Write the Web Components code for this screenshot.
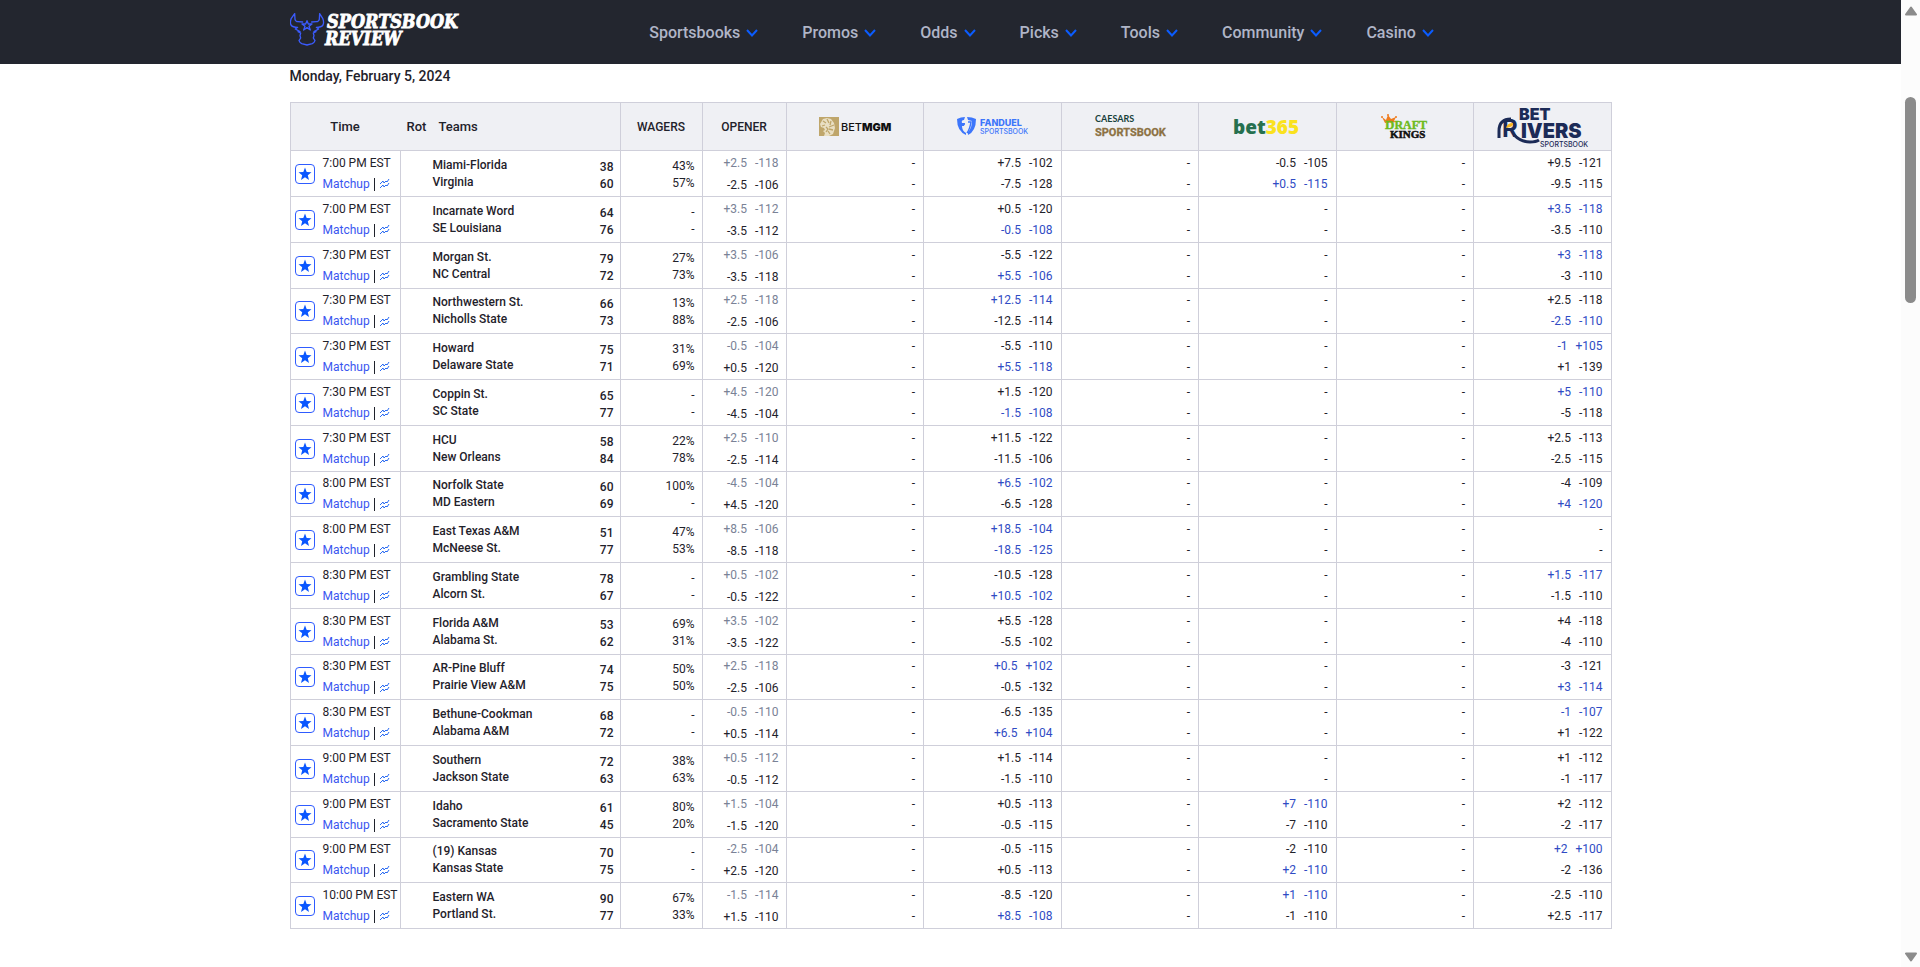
<!DOCTYPE html>
<html lang="en">
<head>
<meta charset="utf-8">
<meta name="viewport" content="width=device-width, initial-scale=1">
<title>Sportsbook Review - Odds</title>
<style>
  body { margin: 0; background: #fff; color: #1f222b; font-family: Roboto, "Liberation Sans", sans-serif; font-size: 12px; }
</style>
</head>
<body>
<odds-page>
  <site-header slot="header">
    <nav-item>Sportsbooks</nav-item>
    <nav-item>Promos</nav-item>
    <nav-item>Odds</nav-item>
    <nav-item>Picks</nav-item>
    <nav-item>Tools</nav-item>
    <nav-item>Community</nav-item>
    <nav-item>Casino</nav-item>
  </site-header>
  <date-heading>Monday, February 5, 2024</date-heading>
  <odds-table></odds-table>
</odds-page>

<script>
const define = (name, html) => {
  const template = document.createElement('template');
  template.innerHTML = html;
  customElements.define(name, class extends HTMLElement {
    constructor() {
      super();
      this.attachShadow({ mode: 'open' }).append(template.content.cloneNode(true));
    }
  });
};

/* ---------- page frame ---------- */
define('odds-page', `
  <style>
    :host { display: grid; grid-template-columns: minmax(0, 1fr) 19px; min-height: 100vh; }
    main { max-width: 1322px; margin: 0 auto; }
  </style>
  <div><slot name="header"></slot><main><slot></slot></main></div>
  <scroll-rail></scroll-rail>`);

define('scroll-rail', `
  <style>
    :host { display: flex; flex-direction: column; align-items: center; position: sticky; top: 0; height: 100vh; box-sizing: border-box; padding: 6px 0 5px; background: #fcfcfc; }
    svg { width: 12px; height: 10px; flex: none; fill: #8b8b8b; stroke: #8b8b8b; stroke-width: 2; stroke-linejoin: round; }
    .above { flex: 81; }
    .thumb { flex: 206; width: 11px; border-radius: 6px; background: #8b8b8b; }
    .below { flex: 649; }
  </style>
  <svg viewBox="0 0 12 10"><path d="M6 1.5 11 8.5H1z"/></svg>
  <div class="above"></div><div class="thumb"></div><div class="below"></div>
  <svg viewBox="0 0 12 10"><path d="M6 8.5 1 1.5h10z"/></svg>`);

/* ---------- header ---------- */
define('site-header', `
  <style>
    :host { display: block; background: #23262f; }
    .bar { display: flex; align-items: center; max-width: 1322px; height: 64px; margin: 0 auto; }
    site-logo { flex: none; width: 182px; }
    nav { flex: 1; display: flex; justify-content: center; gap: 44px; padding-top: 2px; }
  </style>
  <header class="bar"><site-logo></site-logo><nav aria-label="Main"><slot></slot></nav></header>`);

define('site-logo', `
  <style>
    :host { display: block; }
    a { display: block; }
    svg { display: block; }
    text { font-family: "DejaVu Serif Condensed", "DejaVu Serif", serif; font-weight: 700; font-style: italic; fill: #fff; stroke: #fff; stroke-width: .8; }
  </style>
  <a href="#" aria-label="Sportsbook Review home">
    <svg width="182" height="44" viewBox="0 0 182 44">
      <g transform="translate(-6 -2) scale(.3333)" fill="none" stroke="#3b5bfd" stroke-width="4" stroke-linejoin="round" stroke-linecap="round">
        <path d="M32 17 22 31q-5 12-1 20 5 7 20 7l-7 5 14 8h-6l8 4-2 8 2 7-5 8q2 6 8 9l16 4 16-4q6-3 8-9l-5-8 2-7-2-8 8-4h-6l14-8-7-5q15 0 20-7 4-8-1-20L107 17l-1 17q-2 7-9 7l-14 1M32 17l1 17q2 7 9 7l14 1"/>
        <path d="m69 38 4 10h11l-9 7 4 11-10-7-10 7 4-11-9-7h11z"/>
      </g>
      <text x="37" y="18" font-size="18">SPORTSBOOK</text>
      <text x="35" y="35" font-size="18">REVIEW</text>
    </svg>
  </a>`);

define('nav-item', `
  <style>
    :host { display: block; }
    button { display: flex; align-items: center; gap: 6px; padding: 0; border: 0; background: none; color: #b0b5c7; font: 500 16px/20px Roboto, sans-serif; cursor: pointer; }
    svg { width: 12px; height: 8px; fill: none; stroke: #0b5cff; stroke-width: 2; }
  </style>
  <button type="button"><slot></slot><svg viewBox="0 0 12 8" aria-hidden="true"><path d="m1 1 5 5.5L11 1"/></svg></button>`);

define('date-heading', `
  <style>
    :host { display: block; padding: 2px 0 16px; }
    h2 { margin: 0; font: 500 14px/20px Roboto, sans-serif; }
  </style>
  <h2><slot></slot></h2>`);

/* ---------- sportsbook logos ---------- */
const LOGOS = {
  betmgm: ['BetMGM', `<svg width="72" height="24" viewBox="0 0 72 24">
    <rect y="2" width="20" height="19" fill="#bfa66b"/>
    <path d="M1 9 4 4l4-1 4 1 3 4 1 5-2 6-4 2H5l1-3-2-2 2-1-1-2-3-1z" fill="#e9dfc3"/>
    <path d="m4 6 3 2M3 11l3-1M8 4l2 4M12 6l-1 4M15 10l-5 2M14 15l-4-1M11 19l-2-3M7 12l2 2-2 3" stroke="#bfa66b" stroke-width="1.3" fill="none"/>
    <text x="22" y="16" font-family="Inter, sans-serif" font-size="11" fill="#111">BET<tspan font-weight="900">MGM</tspan></text></svg>`],
  fanduel: ['FanDuel Sportsbook', `<svg width="71" height="24" viewBox="0 0 71 24">
    <path d="M0 4q4-2 8-2l-1 3q-3 0-2 3h3l-1 3H5q0 5 4 7v2Q0 16 0 4zM10 2q5 0 9 2 0 12-8 16v-3q4-4 4-11l-4-1z" fill="#3d76fb"/>
    <path d="M5 9h3M11 7h3q-1 7-4 11" stroke="#3d76fb" stroke-width="1.5" fill="none"/>
    <text x="23" y="11" font-family="Inter, sans-serif" font-weight="800" font-size="9" fill="#3d76fb">FANDUEL</text>
    <text x="23" y="19" font-family="Inter, sans-serif" font-size="7" fill="#3d76fb">SPORTSBOOK</text></svg>`],
  caesars: ['Caesars Sportsbook', `<svg width="70" height="24" viewBox="0 0 70 24">
    <text y="7" font-family="Lato, sans-serif" font-weight="700" font-size="9" fill="#17403a">CAESARS</text>
    <text y="21" font-family="Roboto, sans-serif" font-weight="700" font-size="11" fill="#8c7142" stroke="#8c7142" stroke-width=".3">SPORTSBOOK</text></svg>`],
  bet365: ['bet365', `<svg width="68" height="24" viewBox="0 0 68 24">
    <text y="19" font-family="'Noto Sans', sans-serif" font-weight="900" font-size="19" fill="#26704f">bet<tspan fill="#fae21e">365</tspan></text></svg>`],
  draftkings: ['DraftKings', `<svg width="48" height="26" viewBox="0 0 48 26">
    <path d="m4 9-3-6 4 3 2-5 3 4 5-2-2 4 4 1z" fill="#ef7b1e"/>
    <circle cx="1" cy="3" r="1" fill="#ef7b1e"/><circle cx="7" cy="1" r="1" fill="#ef7b1e"/><circle cx="15" cy="3" r="1" fill="#ef7b1e"/>
    <text x="4" y="15" font-family="'Liberation Serif', serif" font-weight="700" font-size="13" fill="#6dba1c" stroke="#6dba1c" stroke-width=".4">D<tspan font-size="12">RAFT</tspan></text>
    <text x="9" y="24" font-family="'Liberation Serif', serif" font-weight="700" font-size="11" fill="#111" stroke="#111" stroke-width=".5">KINGS</text></svg>`],
  betrivers: ['BetRivers Sportsbook', `<svg width="90" height="42" viewBox="0 0 90 42">
    <g font-family="Inter, sans-serif" fill="#1c2b57" font-weight="900">
      <text x="22" y="14" font-size="16">BET</text>
      <text x="24" y="32" font-size="20">IVERS</text>
      <text x="5" y="31" font-size="24" font-weight="700">R</text>
      <text x="43" y="41" font-size="7" font-weight="500">SPORTSBOOK</text>
    </g>
    <path d="M2 32v-7q0-12 12-12" fill="none" stroke="#1c2b57" stroke-width="3"/>
    <path d="M17 29q7 7 16 7 6 0 9-2" fill="none" stroke="#1c2b57" stroke-width="3"/>
    <path d="M9 22q1-5 7-5 1 4-7 5z" fill="#f7b41d"/></svg>`]
};
customElements.define('book-logo', class extends HTMLElement {
  connectedCallback() {
    if (this.shadowRoot) return;
    const [label, svg] = LOGOS[this.getAttribute('book')];
    this.attachShadow({ mode: 'open' }).innerHTML =
      `<style>:host, a { display: flex; justify-content: center; } svg { display: block; overflow: visible; }</style><a href="#" aria-label="${label}">${svg}</a>`;
  }
});

define('star-toggle', `
  <style>
    :host { display: block; flex: none; }
    button { display: grid; place-items: center; width: 20px; height: 20px; padding: 0; border: 1px solid #2f5cff; border-radius: 4px; background: #fff; cursor: pointer; }
    svg { width: 14px; height: 14px; fill: #0a57ff; }
  </style>
  <button type="button" aria-label="Follow game"><svg viewBox="0 0 14 14"><path d="m7 .5 1.700 4.500 4.800.200-3.700 3 1.200 4.700L7 10.200l-4 2.700 1.200-4.700L.500 5.200l4.800-.200z"/></svg></button>`);

define('odds-line', `
  <style>
    :host { display: flex; justify-content: flex-end; gap: 8px; color: inherit; }
    :host([best]) { color: #2f4bc4; }
    :host([opening]) { color: #7a8296; }
  </style>
  <slot></slot>`);

/* ---------- games ----------
   time | away | home | scores | wagers | opener | FanDuel | bet365 | BetRivers
   A line marked with * is the best price on offer. */
const GAMES = `
7:00 PM EST|Miami-Florida|Virginia|38,60|43%,57%|+2.5 -118,-2.5 -106|+7.5 -102,-7.5 -128|-0.5 -105,*+0.5 -115|+9.5 -121,-9.5 -115
7:00 PM EST|Incarnate Word|SE Louisiana|64,76|-,-|+3.5 -112,-3.5 -112|+0.5 -120,*-0.5 -108|-,-|*+3.5 -118,-3.5 -110
7:30 PM EST|Morgan St.|NC Central|79,72|27%,73%|+3.5 -106,-3.5 -118|-5.5 -122,*+5.5 -106|-,-|*+3 -118,-3 -110
7:30 PM EST|Northwestern St.|Nicholls State|66,73|13%,88%|+2.5 -118,-2.5 -106|*+12.5 -114,-12.5 -114|-,-|+2.5 -118,*-2.5 -110
7:30 PM EST|Howard|Delaware State|75,71|31%,69%|-0.5 -104,+0.5 -120|-5.5 -110,*+5.5 -118|-,-|*-1 +105,+1 -139
7:30 PM EST|Coppin St.|SC State|65,77|-,-|+4.5 -120,-4.5 -104|+1.5 -120,*-1.5 -108|-,-|*+5 -110,-5 -118
7:30 PM EST|HCU|New Orleans|58,84|22%,78%|+2.5 -110,-2.5 -114|+11.5 -122,-11.5 -106|-,-|+2.5 -113,-2.5 -115
8:00 PM EST|Norfolk State|MD Eastern|60,69|100%,-|-4.5 -104,+4.5 -120|*+6.5 -102,-6.5 -128|-,-|-4 -109,*+4 -120
8:00 PM EST|East Texas A&amp;M|McNeese St.|51,77|47%,53%|+8.5 -106,-8.5 -118|*+18.5 -104,*-18.5 -125|-,-|-,-
8:30 PM EST|Grambling State|Alcorn St.|78,67|-,-|+0.5 -102,-0.5 -122|-10.5 -128,*+10.5 -102|-,-|*+1.5 -117,-1.5 -110
8:30 PM EST|Florida A&amp;M|Alabama St.|53,62|69%,31%|+3.5 -102,-3.5 -122|+5.5 -128,-5.5 -102|-,-|+4 -118,-4 -110
8:30 PM EST|AR-Pine Bluff|Prairie View A&amp;M|74,75|50%,50%|+2.5 -118,-2.5 -106|*+0.5 +102,-0.5 -132|-,-|-3 -121,*+3 -114
8:30 PM EST|Bethune-Cookman|Alabama A&amp;M|68,72|-,-|-0.5 -110,+0.5 -114|-6.5 -135,*+6.5 +104|-,-|*-1 -107,+1 -122
9:00 PM EST|Southern|Jackson State|72,63|38%,63%|+0.5 -112,-0.5 -112|+1.5 -114,-1.5 -110|-,-|+1 -112,-1 -117
9:00 PM EST|Idaho|Sacramento State|61,45|80%,20%|+1.5 -104,-1.5 -120|+0.5 -113,-0.5 -115|*+7 -110,-7 -110|+2 -112,-2 -117
9:00 PM EST|(19) Kansas|Kansas State|70,75|-,-|-2.5 -104,+2.5 -120|-0.5 -115,+0.5 -113|-2 -110,*+2 -110|*+2 +100,-2 -136
10:00 PM EST|Eastern WA|Portland St.|90,77|67%,33%|-1.5 -114,+1.5 -110|-8.5 -120,*+8.5 -108|*+1 -110,-1 -110|-2.5 -110,+2.5 -117`
  .trim().split('\n').map(row => row.split('|'));

const line = (text, attr = '') => {
  const best = text.startsWith('*');
  const parts = text.replace('*', '').split(' ').map(p => `<span>${p}</span>`).join('');
  return `<odds-line ${attr}${best ? ' best' : ''}>${parts}</odds-line>`;
};
const book = (pair = '-,-') => `<td class="odds">${pair.split(',').map(t => line(t)).join('')}</td>`;
const pair = text => text.split(',').map(t => `<div>${t}</div>`).join('');

const gameRow = ([time, away, home, scores, wagers, opener, fanduel, bet365, betrivers]) => {
  const [first, second] = opener.split(',');
  return `<tr>
    <td class="time"><div class="when"><star-toggle></star-toggle><div>
      <div>${time}</div>
      <div class="links"><a href="#">Matchup</a><i></i><a href="#" aria-label="Line history"><svg viewBox="0 0 11 10"><path d="m1 5 3-3 1 2 2-2 1 1 2-3M1 9l3-3 1 2 2-2 1 1 2-3"/></svg></a></div>
    </div></div></td>
    <td class="rot"></td>
    <td class="teams"><div class="match"><div>${pair(away + ',' + home)}</div><div class="scores">${pair(scores)}</div></div></td>
    <td class="wagers">${pair(wagers)}</td>
    <td class="opener">${line(first, 'opening')}${line(second)}</td>
    ${book()}${book(fanduel)}${book()}${book(bet365)}${book()}${book(betrivers)}
  </tr>`;
};

define('odds-table', `
  <style>
    :host { display: block; }
    table { width: 100%; table-layout: fixed; border-collapse: separate; border-spacing: 0; border: 1px solid #cfcfda; border-bottom: 0; box-sizing: border-box; }
    th, td { box-sizing: border-box; padding: 0; border-bottom: 1px solid #cfcfda; }
    th { height: 48px; background: #eff0f4; font-weight: 500; font-size: 13px; }
    td { height: 46px; }
    tr:nth-child(4n) td { height: 45px; }
    th + th, td + td { border-left: 1px solid #cfcfda; }
    th.rot, th.teams, td.teams { border-left: 0; }
    th.rot { text-align: left; padding-left: 7px; }
    th.teams { text-align: left; padding-left: 7px; }
    th.caps { font-size: 12px; }
    col.time { width: 109px; } col.rot { width: 32px; } col.teams { width: 188px; }
    col.wagers { width: 82px; } col.opener { width: 84px; }
    a { color: #3a56f0; text-decoration: none; }
    .when { display: flex; align-items: center; gap: 8px; padding-left: 4px; line-height: 21px; white-space: nowrap; }
    .links { display: flex; align-items: center; gap: 4px; }
    .links i { width: 1px; height: 13px; background: #1f222b; }
    .links svg { display: block; width: 11px; height: 10px; fill: none; stroke: #2a6bf2; stroke-width: 1; }
    td.teams { font-weight: 500; line-height: 17px; padding: 2px 6px 0 1px; }
    .match { display: flex; justify-content: space-between; }
    .scores { padding-top: 2px; }
    td.wagers { line-height: 17px; text-align: right; padding: 2px 7px 0 0; }
    td.opener { line-height: 22px; padding-right: 7px; }
    td.odds { line-height: 21px; padding-right: 8px; }
  </style>
  <table aria-label="Point spreads">
    <colgroup><col class="time"><col class="rot"><col class="teams"><col class="wagers"><col class="opener"><col span="6"></colgroup>
    <thead><tr>
      <th>Time</th><th class="rot">Rot</th><th class="teams">Teams</th><th class="caps">WAGERS</th><th class="caps">OPENER</th>
      ${Object.keys(LOGOS).map(k => `<th><book-logo book="${k}"></book-logo></th>`).join('')}
    </tr></thead>
    <tbody>${GAMES.map(gameRow).join('')}</tbody>
  </table>`);
</script>
</body>
</html>
